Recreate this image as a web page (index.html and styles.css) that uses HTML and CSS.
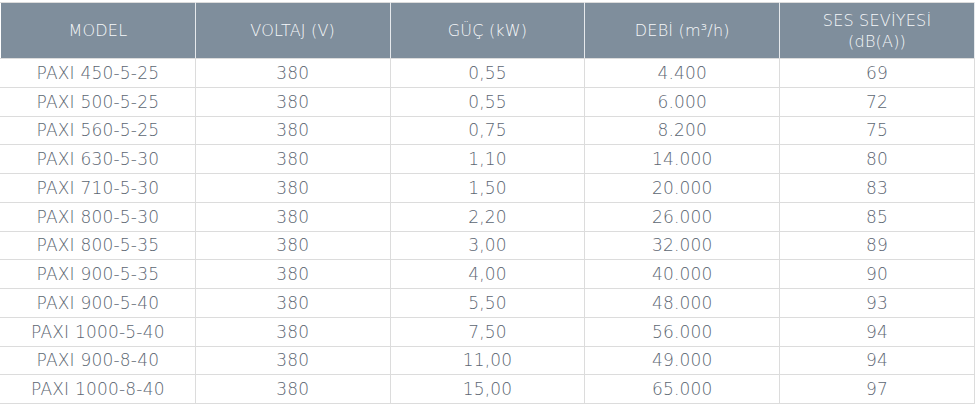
FILE: index.html
```html
<!DOCTYPE html>
<html>
<head>
<meta charset="utf-8">
<link rel="stylesheet" href="styles.css">
</head>
<body>
<table class="spec">
  <thead>
    <tr><th>MODEL</th><th>VOLTAJ (V)</th><th>GÜÇ (kW)</th><th>DEBİ (m³/h)</th><th>SES SEVİYESİ<br>(dB(A))</th></tr>
  </thead>
  <tbody>
    <tr><td>PAXI 450-5-25</td><td>380</td><td>0,55</td><td>4.400</td><td>69</td></tr>
    <tr><td>PAXI 500-5-25</td><td>380</td><td>0,55</td><td>6.000</td><td>72</td></tr>
    <tr><td>PAXI 560-5-25</td><td>380</td><td>0,75</td><td>8.200</td><td>75</td></tr>
    <tr><td>PAXI 630-5-30</td><td>380</td><td>1,10</td><td>14.000</td><td>80</td></tr>
    <tr><td>PAXI 710-5-30</td><td>380</td><td>1,50</td><td>20.000</td><td>83</td></tr>
    <tr><td>PAXI 800-5-30</td><td>380</td><td>2,20</td><td>26.000</td><td>85</td></tr>
    <tr><td>PAXI 800-5-35</td><td>380</td><td>3,00</td><td>32.000</td><td>89</td></tr>
    <tr><td>PAXI 900-5-35</td><td>380</td><td>4,00</td><td>40.000</td><td>90</td></tr>
    <tr><td>PAXI 900-5-40</td><td>380</td><td>5,50</td><td>48.000</td><td>93</td></tr>
    <tr><td>PAXI 1000-5-40</td><td>380</td><td>7,50</td><td>56.000</td><td>94</td></tr>
    <tr><td>PAXI 900-8-40</td><td>380</td><td>11,00</td><td>49.000</td><td>94</td></tr>
    <tr><td>PAXI 1000-8-40</td><td>380</td><td>15,00</td><td>65.000</td><td>97</td></tr>
  </tbody>
</table>
</body>
</html>
```
FILE: styles.css
```css
html, body { margin: 0; padding: 0; background: #fff; }
body { padding: 2px 0 0 0; }
.spec {
  border-collapse: collapse;
  width: 975px;
  table-layout: fixed;
  font-family: "DejaVu Sans", sans-serif;
  font-size: 17px;
  letter-spacing: 0.2px;
  color: #5c6672;
}
.spec th, .spec td {
  border: 1px solid #dcdcdc;
  text-align: center;
  padding: 0;
}
.spec th {
  background: #7f8e9c;
  color: #f6f8fa;
  font-weight: 200;
  font-size: 16px;
  height: 55px;
  line-height: 21px;
  border-left-color: #e6e9ec;
  border-right-color: #e6e9ec;
}
.spec th:first-child { border-left-color: #fff; }
.spec td:first-child { border-left-color: #fff; }
.spec td {
  height: 27.75px;
  font-weight: 200;
}
```
